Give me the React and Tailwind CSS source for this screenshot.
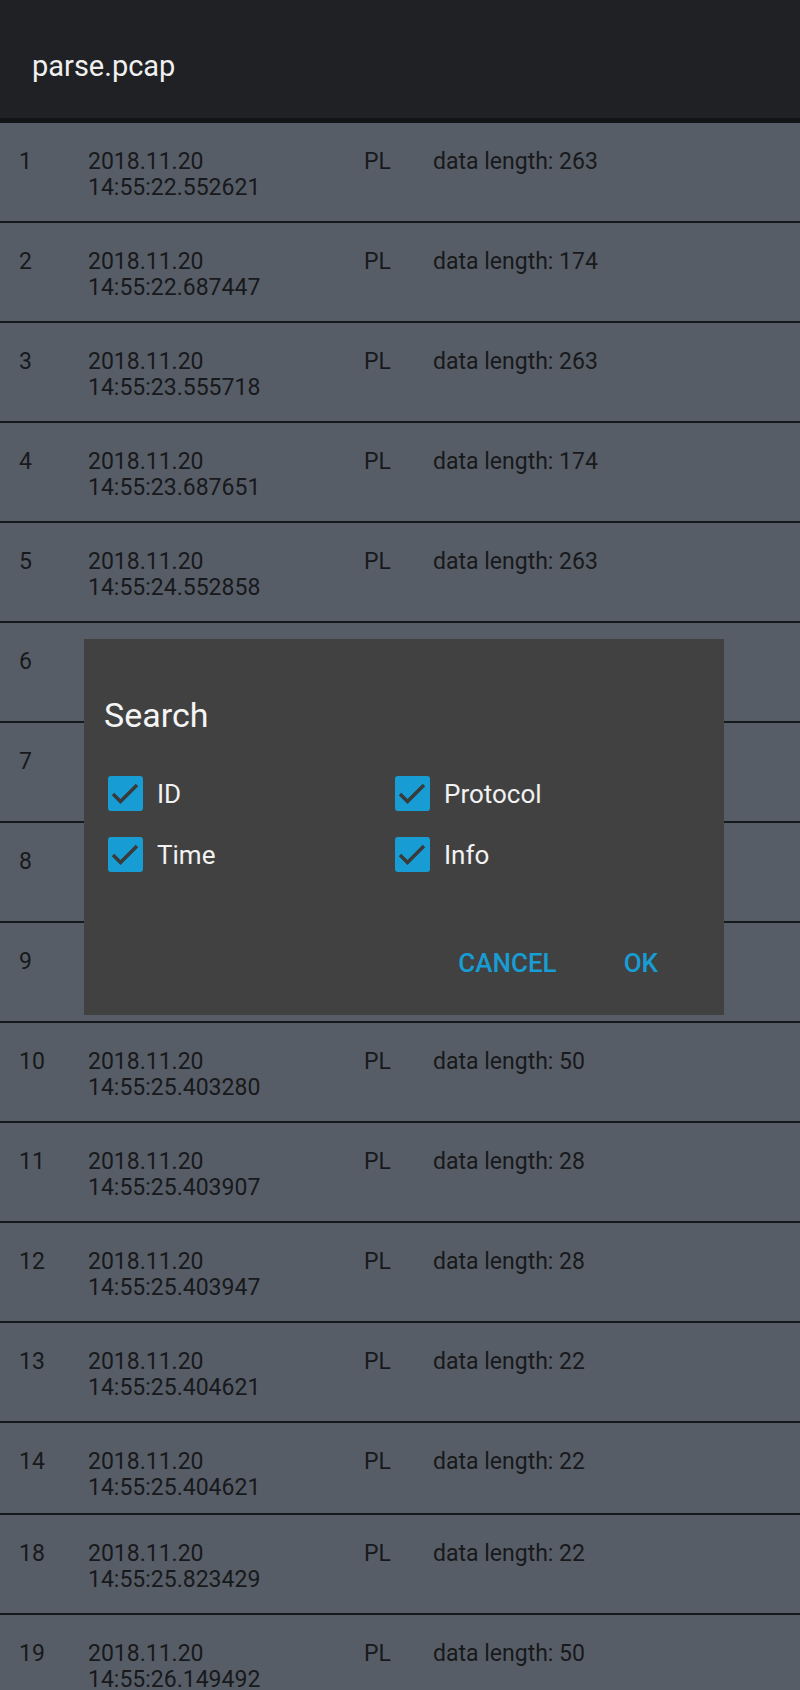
const packets = [
  { id: 1, time: "14:55:22.552621", len: 263 },
  { id: 2, time: "14:55:22.687447", len: 174 },
  { id: 3, time: "14:55:23.555718", len: 263 },
  { id: 4, time: "14:55:23.687651", len: 174 },
  { id: 5, time: "14:55:24.552858", len: 263 },
  { id: 6, covered: true },
  { id: 7, covered: true },
  { id: 8, covered: true },
  { id: 9, covered: true },
  { id: 10, time: "14:55:25.403280", len: 50 },
  { id: 11, time: "14:55:25.403907", len: 28 },
  { id: 12, time: "14:55:25.403947", len: 28 },
  { id: 13, time: "14:55:25.404621", len: 22 },
  { id: 14, time: "14:55:25.404621", len: 22, short: true },
  { id: 18, time: "14:55:25.823429", len: 22 },
  { id: 19, time: "14:55:26.149492", len: 50 },
];

function PacketRow({ p }) {
  return (
    <div
      className={
        (p.short ? "h-[92px] " : "h-[100px] ") +
        "flex shrink-0 border-b-2 border-[#15191c] pt-[26px] text-[23px] leading-[26px] text-[#17191c]"
      }
    >
      <div className="w-[88px] pl-[19px]">{p.id}</div>
      {/* rows under the dialog only show their id */}
      {!p.covered && (
        <>
          <div className="w-[276px]">
            <div>2018.11.20</div>
            <div>{p.time}</div>
          </div>
          <div className="w-[69px]">PL</div>
          <div>data length: {p.len}</div>
        </>
      )}
    </div>
  );
}

function Check({ label }) {
  return (
    <div className="flex items-center gap-[14px]">
      <div className="flex h-[35px] w-[35px] items-center justify-center rounded-[3px] bg-[#179dd3]">
        <svg width="35" height="35" viewBox="0 0 35 35">
          <polyline points="5,18 12.5,25.5 29,9" fill="none" stroke="#3a3a3a" strokeWidth="3.5" />
        </svg>
      </div>
      <span className="text-[26px] leading-[30px] text-[#f2f2f2]">{label}</span>
    </div>
  );
}

function SearchDialog() {
  return (
    <div className="absolute left-[84px] top-[639px] flex h-[376px] w-[640px] flex-col bg-[#414141]">
      <div className="pl-[20px] pt-[56px] text-[34px] leading-[40px] text-[#f5f5f5]">Search</div>
      <div className="mt-[41px] grid grid-cols-[287px_1fr] gap-y-[26px] pl-[24px]">
        <Check label="ID" />
        <Check label="Protocol" />
        <Check label="Time" />
        <Check label="Info" />
      </div>
      <div className="mt-[76px] flex justify-end gap-[67px] pr-[66px] text-[26px] font-medium leading-[30px] text-[#179dd3]">
        <button>CANCEL</button>
        <button>OK</button>
      </div>
    </div>
  );
}

export default function App() {
  return (
    <div className="relative h-[1690px] w-[800px] overflow-hidden bg-[#575d66] font-['Roboto',sans-serif]">
      <header className="flex h-[123px] items-center border-b-[5px] border-[#111516] bg-[#202124] pl-[32px] pt-[16px]">
        <h1 className="text-[29px] text-[#f0f0f0]">parse.pcap</h1>
      </header>
      <div className="flex flex-col">
        {packets.map((p) => (
          <PacketRow key={p.id} p={p} />
        ))}
      </div>
      <SearchDialog />
    </div>
  );
}
